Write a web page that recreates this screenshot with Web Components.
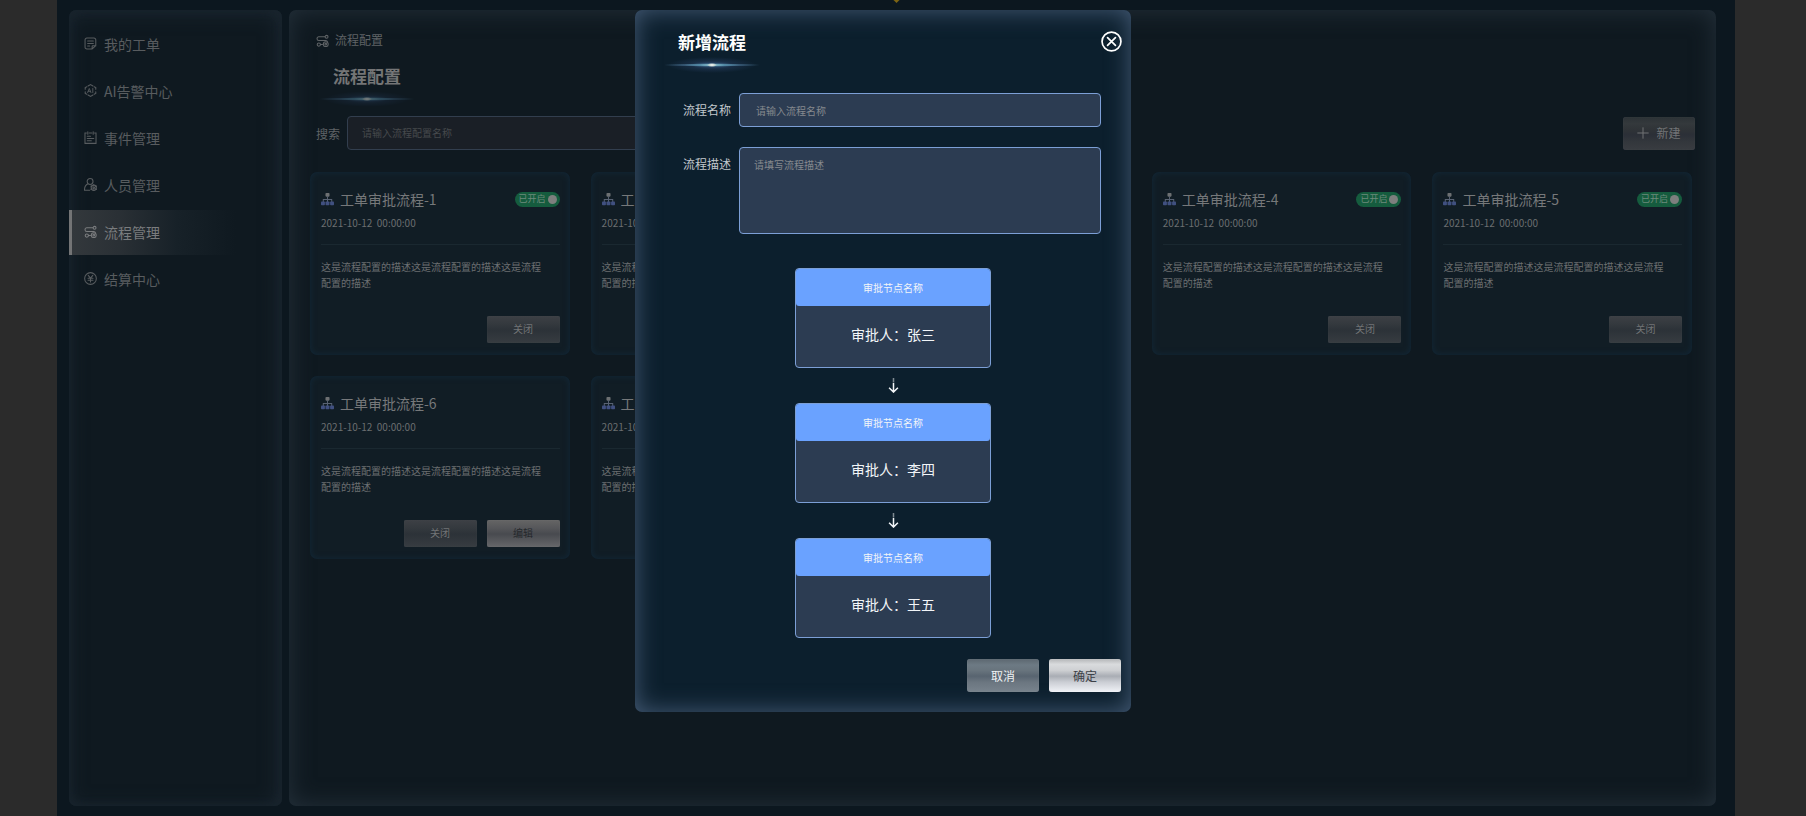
<!DOCTYPE html>
<html lang="zh-CN">
<head>
<meta charset="utf-8">
<title>流程管理</title>
<style>
    body {
        margin: 0;
        background: #2b2b2b;
        font-family: "Noto Sans CJK SC", "Noto Sans", sans-serif;
        font-size: 12px;
    }
</style>
</head>
<body>
<app-stage>
    <side-menu slot="side">
        <menu-item icon="order">我的工单</menu-item>
        <menu-item icon="ai">AI告警中心</menu-item>
        <menu-item icon="event">事件管理</menu-item>
        <menu-item icon="people">人员管理</menu-item>
        <menu-item icon="flow" active>流程管理</menu-item>
        <menu-item icon="money">结算中心</menu-item>
    </side-menu>
    <flow-panel>
        <flow-card name="工单审批流程-1" enabled></flow-card>
        <flow-card name="工单审批流程-2" enabled></flow-card>
        <flow-card name="工单审批流程-3" enabled></flow-card>
        <flow-card name="工单审批流程-4" enabled></flow-card>
        <flow-card name="工单审批流程-5" enabled></flow-card>
        <flow-card name="工单审批流程-6"></flow-card>
        <flow-card name="工单审批流程-7"></flow-card>
    </flow-panel>
    <flow-dialog slot="dialog">
        <approve-node person="张三"></approve-node>
        <approve-node person="李四"></approve-node>
        <approve-node person="王五"></approve-node>
    </flow-dialog>
</app-stage>

<script>
const ICONS = {
    order: `<path d="M14.500 9V3.500a2.200 2.200 0 0 0-2.200-2.200H3.500a2.200 2.200 0 0 0-2.200 2.200v9a2.200 2.200 0 0 0 2.200 2.200H10l4.500-4M14.500 9v1.700H11a1 1 0 0 0-1 1v3M4.500 5h7M4.500 8h7M4.500 11h2.500"/>`,
    ai: `<path d="M5 2.500 8 .8l3 1.700M12.500 3.300l2 1.200v2M14.500 9.500v2l-2 1.200M11 13.500l-3 1.700-3-1.700M3.500 12.700l-2-1.200v-2M1.500 6.500v-2l2-1.200"/><path d="m4.500 10.500 2-5 2 5M5.200 9h2.600M10.800 5.500v5" stroke-width="1.100"/>`,
    event: `<path d="M3 2.500H1.200v12.700h13.600V2.500H13M6.500 2.500h3M4.700 1v3M11.300 1v3M4 6.500h4M4 9.200h8M4 12h5"/>`,
    people: `<circle cx="7.500" cy="4.300" r="3.600"/><path d="M4.800 7.200C2 8.500.6 11 .6 15H7"/><circle cx="12" cy="12" r="3.200"/><circle cx="12" cy="12" r="1"/><path d="M12 8v1.500M12 14.500V16M8.500 10l1.300.8M14.200 13.200l1.300.8M15.500 10l-1.300.8M9.800 13.200l-1.300.8"/>`,
    flow: `<path d="M11 3.500H3.500a2.200 2.200 0 0 0 0 4.500h8.500a2 2 0 0 1 2 1.500M5.500 13H8"/><circle cx="13" cy="3.500" r="1.800"/><circle cx="3.500" cy="13" r="2"/><circle cx="12" cy="12.500" r="3"/><circle cx="12" cy="12.500" r="1"/>`,
    money: `<circle cx="8" cy="8" r="7.200"/><path d="M5.200 4.200 8 7.500l2.800-3.300M8 7.500v4.800M5 7.800h6M5 10.200h6"/>`,
    tree: `<g stroke="none"><rect x="5.500" y="0" width="5" height="4.500" rx="1" fill="#6d7072"/><path d="M7.400 4h1.200v3.500h5.200V11h-1.200V8.600H8.600V11H7.400V8.600h-4V11H2.200V7.500h5.200z" fill="#586272"/><rect x="0" y="10.500" width="4.800" height="4.500" rx="1" fill="#405080"/><rect x="5.600" y="10.500" width="4.800" height="4.500" rx="1" fill="#405080"/><rect x="11.200" y="10.500" width="4.800" height="4.500" rx="1" fill="#405080"/></g>`,
    plus: `<path d="M8 1v14M1 8h14"/>`,
    close: `<circle cx="8" cy="8" r="7.200"/><path d="m5 5 6 6M11 5l-6 6"/>`,
    down: `<g stroke-linecap="butt" stroke-width="1.600"><path d="M8 .5v1M8 2.700v1M8 5v10M3.300 10.300 8 15l4.700-4.700"/></g>`,
};

class UiIcon extends HTMLElement {
    constructor() {
        super();
        this.attachShadow({ mode: "open" });
    }

    connectedCallback() {
        this.shadowRoot.innerHTML = `
            <style>
                :host {
                    display: block;
                    flex: none;
                    width: var(--icon-size, 13px);
                    height: var(--icon-size, 13px);
                }
                svg {
                    display: block;
                    width: 100%;
                    height: 100%;
                }
            </style>
            <svg viewBox="0 0 16 16" fill="none" stroke="currentColor" stroke-width="1.300" stroke-linecap="round" aria-hidden="true">${ICONS[this.getAttribute("name")]}</svg>
        `;
    }
}

class AppStage extends HTMLElement {
    constructor() {
        super();
        this.attachShadow({ mode: "open" });
        this.shadowRoot.innerHTML = `
            <style>
                :host {
                    display: flex;
                    gap: 7px;
                    position: relative;
                    box-sizing: border-box;
                    min-height: 100vh;
                    margin: 0 71px 0 57px;
                    padding: 10px 19px 10px 12px;
                    background: #0c171f;
                }
                #mark {
                    position: absolute;
                    top: -3px;
                    left: 50%;
                    width: 5px;
                    height: 5px;
                    margin-left: -2px;
                    background: #7d6413;
                    transform: rotate(45deg);
                }
                #mask {
                    position: absolute;
                    inset: 0;
                    display: flex;
                    justify-content: center;
                    align-items: flex-start;
                    padding: 10px 26px 0 0;
                }
            </style>
            <slot name="side"></slot>
            <slot></slot>
            <div id="mark"></div>
            <div id="mask"><slot name="dialog"></slot></div>
        `;
    }
}

class SideMenu extends HTMLElement {
    constructor() {
        super();
        this.attachShadow({ mode: "open" });
        this.shadowRoot.innerHTML = `
            <style>
                :host {
                    display: block;
                    flex: 0 0 213px;
                    background: #0f1920;
                    border-radius: 7px;
                    box-shadow: inset 0 0 10px #17222b, inset -2px 2px 20px #1f2b35;
                }
                nav {
                    display: flex;
                    flex-direction: column;
                    gap: 2px;
                    padding: 12px 0;
                }
            </style>
            <nav><slot></slot></nav>
        `;
    }
}

class MenuItem extends HTMLElement {
    constructor() {
        super();
        this.attachShadow({ mode: "open" });
    }

    connectedCallback() {
        this.shadowRoot.innerHTML = `
            <style>
                :host {
                    display: block;
                }
                a {
                    display: flex;
                    align-items: center;
                    gap: 7px;
                    box-sizing: border-box;
                    height: 45px;
                    padding: 0 0 2px 12px;
                    border-left: 3px solid transparent;
                    color: #585c5f;
                    font-size: 14px;
                    text-decoration: none;
                }
                :host([active]) a {
                    border-left-color: #737475;
                    background: linear-gradient(90deg, #33383c 0, #2a3035 22%, #172128 50%, transparent 78%);
                    color: #7a7c7e;
                }
            </style>
            <a href="#"><ui-icon name="${this.getAttribute("icon")}"></ui-icon><slot></slot></a>
        `;
    }
}

class GlowTitle extends HTMLElement {
    constructor() {
        super();
        this.attachShadow({ mode: "open" });
        this.shadowRoot.innerHTML = `
            <style>
                :host {
                    display: flex;
                    flex-direction: column;
                    align-items: center;
                    gap: 3px;
                    width: 100px;
                }
                h1 {
                    margin: 0;
                    font-size: 17px;
                    line-height: 24px;
                    font-weight: 700;
                    white-space: nowrap;
                }
                #glow {
                    width: 100%;
                    height: 16px;
                    opacity: var(--glow, 1);
                    background:
                        radial-gradient(5px 2px at 50% 50%, #fff 0, #f4ecdcaa 50%, transparent 100%),
                        radial-gradient(28px 2px at 50% 50%, #a8dce4 0, #5c9fb888 50%, transparent 100%),
                        radial-gradient(55px 1px at 50% 50%, #7fb0c8 0, #4a7494 50%, transparent 100%),
                        radial-gradient(44px 8px at 50% 50%, #3d5f90cc 0, #2a426866 50%, transparent 100%);
                }
            </style>
            <h1><slot></slot></h1>
            <div id="glow"></div>
        `;
    }
}

class MetalButton extends HTMLElement {
    constructor() {
        super();
        this.attachShadow({ mode: "open" });
        this.shadowRoot.innerHTML = `
            <style>
                :host {
                    display: block;
                }
                button {
                    display: flex;
                    align-items: center;
                    justify-content: center;
                    gap: 7px;
                    box-sizing: border-box;
                    width: 72px;
                    height: 33px;
                    padding: 0 0 1px;
                    border: 0;
                    border-radius: 3px;
                    font: inherit;
                    color: #eef1f3;
                    background: linear-gradient(#5c6770 0, #6d7a84 18%, #68747d 35%, #586470 52%, #6b7680 70%, #78838d 100%);
                    box-shadow: inset 0 0 1px #8a949c;
                }
                :host([kind="light"]) button {
                    color: #3c4148;
                    background: linear-gradient(#b4b6b8 0, #d9dbdd 16%, #ced0d3 34%, #a9adb4 52%, #cbced4 70%, #f0f2f7 100%);
                    box-shadow: inset 0 0 1px #fff;
                }
                :host([kind="dim"]) button {
                    color: #727476;
                    background: linear-gradient(#2c3236 0, #34393c 20%, #2f3337 40%, #2b2f37 54%, #33373c 75%, #393c41 100%);
                    box-shadow: inset 0 0 1px #4b5056;
                }
                :host([size="small"]) button {
                    width: 73px;
                    height: 27px;
                    border-radius: 2px;
                    font-size: 10px;
                }
                :host([size="small"][kind="dim"]) button {
                    background: linear-gradient(#3d4045 0, #34393e 30%, #2c3238 52%, #373c41 100%);
                }
                :host([kind="edit"]) button {
                    color: #25282c;
                    background: linear-gradient(#656565 0, #56575a 30%, #484a4f 52%, #66676a 100%);
                    box-shadow: inset 0 0 1px #777;
                }
            </style>
            <button type="button"><slot></slot></button>
        `;
    }
}

class FlowPanel extends HTMLElement {
    constructor() {
        super();
        this.attachShadow({ mode: "open" });
        this.shadowRoot.innerHTML = `
            <style>
                :host {
                    display: block;
                    flex: 1;
                    box-sizing: border-box;
                    padding: 21px 24px 21px 21px;
                    background: #0f1920;
                    border-radius: 7px;
                    box-shadow: inset 0 0 25px #25313b;
                    color: #5f6366;
                }
                #crumb {
                    display: flex;
                    align-items: center;
                    gap: 6px;
                    padding-left: 6px;
                    line-height: 18px;
                }
                glow-title {
                    --glow: 0.45;
                    margin: 15px 0 0 7px;
                    color: #747576;
                }
                #bar {
                    display: flex;
                    align-items: center;
                    margin: 9px -3px 0 0;
                    padding-left: 6px;
                }
                #bar metal-button {
                    --icon-size: 12px;
                    margin-left: auto;
                }
                input {
                    box-sizing: border-box;
                    width: 360px;
                    height: 34px;
                    margin-left: 7px;
                    padding: 0 14px 2px;
                    border: 1px solid #323e4e;
                    border-radius: 4px;
                    background: #1a1f26;
                    color: #777;
                    font: inherit;
                    font-size: 10px;
                }
                input::placeholder {
                    color: #46494c;
                }
                #grid {
                    display: grid;
                    grid-template-columns: repeat(5, 1fr);
                    gap: 21px;
                    margin-top: 22px;
                }
            </style>
            <div id="crumb"><ui-icon name="flow"></ui-icon>流程配置</div>
            <glow-title>流程配置</glow-title>
            <div id="bar">
                <label for="search">搜索</label>
                <input id="search" type="text" placeholder="请输入流程配置名称">
                <metal-button kind="dim"><ui-icon name="plus"></ui-icon>新建</metal-button>
            </div>
            <div id="grid"><slot></slot></div>
        `;
    }
}

class FlowCard extends HTMLElement {
    constructor() {
        super();
        this.attachShadow({ mode: "open" });
    }

    connectedCallback() {
        // a running flow has to be closed before it can be edited
        const enabled = this.hasAttribute("enabled");
        const toggle = enabled ? `<label>已开启<input type="checkbox" checked></label>` : "";
        const edit = enabled ? "" : `<metal-button size="small" kind="edit">编辑</metal-button>`;
        this.shadowRoot.innerHTML = `
            <style>
                :host {
                    display: block;
                    padding: 15px 10px 12px 11px;
                    border-radius: 7px;
                    background: #111d25;
                    box-shadow: inset 0 0 6px #12293a;
                    color: #6b6e70;
                    font-size: 10px;
                    line-height: 16px;
                }
                header {
                    display: flex;
                    align-items: center;
                    gap: 6px;
                    height: 24px;
                }
                h2 {
                    margin: 0;
                    font-size: 14px;
                    font-weight: 400;
                    color: #76787a;
                }
                label {
                    display: flex;
                    align-items: center;
                    gap: 2px;
                    height: 15px;
                    margin-left: auto;
                    padding: 0 3px 0 4px;
                    border-radius: 8px;
                    background: #155c3e;
                    color: #6d8a7c;
                    font-size: 9px;
                }
                input {
                    appearance: none;
                    width: 9px;
                    height: 9px;
                    margin: 0;
                    border-radius: 50%;
                    background: #7d7f7e;
                }
                time {
                    display: block;
                    margin-top: 4px;
                    white-space: pre;
                }
                p {
                    margin: 13px 0 0;
                    padding: 14px 14px 0 0;
                    border-top: 1px solid #1a2830;
                }
                footer {
                    display: flex;
                    justify-content: flex-end;
                    gap: 10px;
                    margin-top: 25px;
                }
            </style>
            <header>
                <ui-icon name="tree"></ui-icon>
                <h2>${this.getAttribute("name")}</h2>
                ${toggle}
            </header>
            <time>2021-10-12  00:00:00</time>
            <p>这是流程配置的描述这是流程配置的描述这是流程配置的描述</p>
            <footer><metal-button size="small" kind="dim">关闭</metal-button>${edit}</footer>
        `;
    }
}

class ApproveNode extends HTMLElement {
    constructor() {
        super();
        this.attachShadow({ mode: "open" });
    }

    connectedCallback() {
        this.shadowRoot.innerHTML = `
            <style>
                :host {
                    display: flex;
                    flex-direction: column;
                    align-items: center;
                    color: #f2f5f8;
                }
                #box {
                    box-sizing: border-box;
                    width: 196px;
                    height: 100px;
                    border: 1px solid #7c9fd6;
                    border-radius: 4px;
                    background: #2c3c52;
                    text-align: center;
                }
                #name {
                    border-radius: 3px;
                    background: #6aa2ff;
                    font-size: 10px;
                    line-height: 37px;
                }
                #person {
                    font-size: 14px;
                    line-height: 56px;
                }
                ui-icon {
                    --icon-size: 15px;
                    margin: 10px 0;
                }
                :host(:last-child) ui-icon {
                    display: none;
                }
            </style>
            <div id="box">
                <div id="name">审批节点名称</div>
                <div id="person">审批人：${this.getAttribute("person")}</div>
            </div>
            <ui-icon name="down"></ui-icon>
        `;
    }
}

class FlowDialog extends HTMLElement {
    constructor() {
        super();
        this.attachShadow({ mode: "open" });
        this.shadowRoot.innerHTML = `
            <style>
                :host {
                    display: block;
                    width: 496px;
                    border-radius: 7px;
                    background: #0c1f2d;
                    box-shadow: inset 0 0 25px #465c77;
                    color: #c3c9ce;
                }
                header {
                    display: flex;
                    justify-content: space-between;
                    align-items: flex-start;
                    padding: 20px 9px 0 27px;
                    color: #fff;
                }
                #close {
                    --icon-size: 21px;
                    margin-top: 1px;
                    padding: 0;
                    border: 0;
                    background: none;
                    color: inherit;
                }
                #form {
                    display: grid;
                    grid-template-columns: auto 1fr;
                    gap: 20px 8px;
                    padding: 20px 30px 0 48px;
                }
                label {
                    line-height: 34px;
                }
                input, textarea {
                    box-sizing: border-box;
                    width: 100%;
                    margin: 0;
                    border: 1px solid #7c9fd6;
                    border-radius: 4px;
                    background: #2c3c52;
                    color: #fff;
                    font: inherit;
                    font-size: 10px;
                    line-height: 16px;
                    resize: none;
                }
                input {
                    height: 34px;
                    padding: 0 16px;
                }
                textarea {
                    display: block;
                    height: 87px;
                    padding: 9px 14px;
                }
                ::placeholder {
                    color: #85898e;
                }
                #nodes {
                    padding: 34px 0 0 20px;
                }
                footer {
                    display: flex;
                    justify-content: flex-end;
                    gap: 10px;
                    padding: 21px 10px 20px;
                }
            </style>
            <header>
                <glow-title>新增流程</glow-title>
                <button id="close" type="button" aria-label="关闭"><ui-icon name="close"></ui-icon></button>
            </header>
            <div id="form">
                <label for="name">流程名称</label>
                <input id="name" type="text" placeholder="请输入流程名称">
                <label for="desc">流程描述</label>
                <textarea id="desc" placeholder="请填写流程描述"></textarea>
            </div>
            <div id="nodes"><slot></slot></div>
            <footer>
                <metal-button>取消</metal-button>
                <metal-button kind="light">确定</metal-button>
            </footer>
        `;
    }
}

customElements.define("ui-icon", UiIcon);
customElements.define("app-stage", AppStage);
customElements.define("side-menu", SideMenu);
customElements.define("menu-item", MenuItem);
customElements.define("glow-title", GlowTitle);
customElements.define("metal-button", MetalButton);
customElements.define("flow-panel", FlowPanel);
customElements.define("flow-card", FlowCard);
customElements.define("approve-node", ApproveNode);
customElements.define("flow-dialog", FlowDialog);
</script>
</body>
</html>
